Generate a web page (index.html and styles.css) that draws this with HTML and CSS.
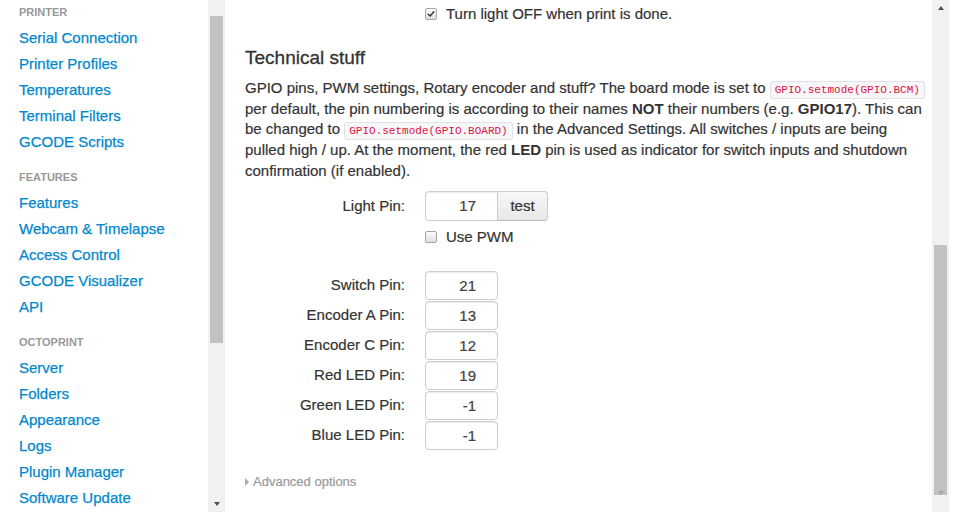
FILE: index.html
```html
<!DOCTYPE html>
<html>
<head>
<meta charset="utf-8">
<title>Settings</title>
<link rel="stylesheet" href="styles.css">
</head>
<body>
<div class="app">
  <div class="side-pane">
    <nav class="side">
      <ul class="nav">
        <li class="nav-header">Printer</li>
        <li><a>Serial Connection</a></li>
        <li><a>Printer Profiles</a></li>
        <li><a>Temperatures</a></li>
        <li><a>Terminal Filters</a></li>
        <li><a>GCODE Scripts</a></li>
        <li class="nav-header sep">Features</li>
        <li><a>Features</a></li>
        <li><a>Webcam &amp; Timelapse</a></li>
        <li><a>Access Control</a></li>
        <li><a>GCODE Visualizer</a></li>
        <li><a>API</a></li>
        <li class="nav-header sep">OctoPrint</li>
        <li><a>Server</a></li>
        <li><a>Folders</a></li>
        <li><a>Appearance</a></li>
        <li><a>Logs</a></li>
        <li><a>Plugin Manager</a></li>
        <li><a>Software Update</a></li>
      </ul>
    </nav>
    <div class="sbar">
      <div class="sbtn top"><span class="arr up light"></span></div>
      <div class="thumb side-thumb"></div>
      <div class="fill"></div>
      <div class="sbtn bottom"><span class="arr down dark"></span></div>
    </div>
  </div>
  <div class="main-pane">
    <div class="content">
      <div class="check-row">
        <span class="cb checked"><svg viewBox="0 0 12 12" width="10" height="10"><path d="M2.6 6.2 L4.9 8.4 L9.4 3.2" fill="none" stroke="#333" stroke-width="1.7" stroke-linecap="round" stroke-linejoin="round"/></svg></span>
        <span class="cb-text">Turn light OFF when print is done.</span>
      </div>
      <h4 class="title">Technical stuff</h4>
      <p class="desc">GPIO pins, PWM settings, Rotary encoder and stuff? The board mode is set to <code>GPIO.setmode(GPIO.BCM)</code> per default, the pin numbering is according to their names <strong>NOT</strong> their numbers (e.g. <strong>GPIO17</strong>). This can be changed to <code>GPIO.setmode(GPIO.BOARD)</code> in the Advanced Settings. All switches / inputs are being pulled high / up. At the moment, the red <strong>LED</strong> pin is used as indicator for switch inputs and shutdown confirmation (if enabled).</p>
      <div class="form-row light">
        <label class="ctl-label">Light Pin:</label>
        <div class="append">
          <span class="field join">17</span>
          <span class="btn">test</span>
        </div>
      </div>
      <div class="check-row pwm">
        <span class="cb"></span>
        <span class="cb-text">Use PWM</span>
      </div>
      <div class="pins">
        <div class="form-row pin"><label class="ctl-label">Switch Pin:</label><span class="field">21</span></div>
        <div class="form-row pin"><label class="ctl-label">Encoder A Pin:</label><span class="field">13</span></div>
        <div class="form-row pin"><label class="ctl-label">Encoder C Pin:</label><span class="field">12</span></div>
        <div class="form-row pin"><label class="ctl-label">Red LED Pin:</label><span class="field">19</span></div>
        <div class="form-row pin"><label class="ctl-label">Green LED Pin:</label><span class="field">-1</span></div>
        <div class="form-row pin"><label class="ctl-label">Blue LED Pin:</label><span class="field">-1</span></div>
      </div>
      <div class="advanced"><span class="caret"></span>Advanced options</div>
    </div>
    <div class="sbar">
      <div class="sbtn top"><span class="arr up dark"></span></div>
      <div class="fill"></div>
      <div class="thumb main-thumb"></div>
      <div class="sbtn bottom"><span class="arr down light"></span></div>
    </div>
  </div>
</div>
</body>
</html>
```
FILE: styles.css
```css
html, body {
  margin: 0;
  padding: 0;
  background: #fff;
}
body {
  font-family: "Liberation Sans", Arial, Helvetica, sans-serif;
  font-size: 15px;
  line-height: 20px;
  color: #333;
}
.app {
  display: flex;
  height: 512px;
  width: 949px;
}
.side-pane {
  display: flex;
  width: 225px;
  height: 512px;
}
.side {
  width: 208px;
  height: 512px;
  overflow: hidden;
}
.nav {
  list-style: none;
  margin: -1px 0 0;
  padding: 0;
}
.nav li a {
  display: block;
  padding: 3px 19px;
  line-height: 20px;
  color: #0088cc;
  -webkit-text-stroke: 0.25px #0088cc;
  cursor: pointer;
}
.nav-header {
  padding: 3px 19px;
  line-height: 20px;
  font-size: 11px;
  font-weight: bold;
  text-transform: uppercase;
  color: #999;
}
.nav-header.sep {
  margin-top: 9px;
}

/* scrollbars */
.sbar {
  width: 17px;
  height: 512px;
  background: #f1f1f1;
  display: flex;
  flex-direction: column;
  flex-shrink: 0;
}
.sbtn {
  display: flex;
  align-items: center;
  justify-content: center;
}
.sbtn.top { height: 16px; }
.sbtn.bottom { height: 17px; }
.fill { flex: 1; }
.thumb {
  margin: 0 2px;
  background: #c1c1c1;
}
.side-thumb { height: 327px; }
.main-thumb { height: 250px; }
.arr {
  width: 0;
  height: 0;
  border-left: 3.5px solid transparent;
  border-right: 3.5px solid transparent;
}
.arr.up { border-bottom: 4px solid #a3a3a3; }
.arr.down { border-top: 4px solid #a3a3a3; }
.arr.up.dark { border-bottom-color: #505050; }
.arr.down.dark { border-top-color: #505050; }

/* main */
.main-pane {
  display: flex;
  width: 724px;
  height: 512px;
}
.content {
  width: 682px;
  padding: 4px 5px 0 20px;
  overflow: hidden;
  -webkit-text-stroke: 0.2px #333;
}
.check-row {
  display: flex;
  align-items: center;
  height: 20px;
  margin-left: 180px;
}
.cb {
  box-sizing: border-box;
  width: 12px;
  height: 12px;
  border: 1px solid #a6a6a6;
  border-radius: 2px;
  background: linear-gradient(#fdfdfd, #dedede);
  display: flex;
  align-items: center;
  justify-content: center;
  -webkit-text-stroke: 0;
}
.cb-text {
  margin-left: 9px;
}
.title {
  margin: 22px 0 0;
  font-size: 19px;
  line-height: 24px;
  font-weight: normal;
  -webkit-text-stroke: 0.3px #333;
}
.desc {
  margin: 8px 0 0;
  line-height: 20.7px;
}
.desc strong {
  font-weight: bold;
  -webkit-text-stroke: 0;
}
code {
  font-family: "Liberation Mono", "DejaVu Sans Mono", monospace;
  font-size: 11px;
  line-height: 12px;
  padding: 2px 4px;
  color: #dd1144;
  background: #f7f7f9;
  border: 1px solid #e1e1e8;
  border-radius: 3px;
  white-space: nowrap;
  -webkit-text-stroke: 0;
}
.form-row {
  display: flex;
  align-items: center;
}
.ctl-label {
  width: 160px;
  margin-right: 20px;
  text-align: right;
}
.light {
  margin-top: 9px;
  height: 30px;
}
.append {
  display: flex;
}
.field {
  box-sizing: border-box;
  width: 73px;
  height: 29px;
  line-height: 27px;
  padding-right: 21px;
  text-align: right;
  color: #444;
  background: #fff;
  border: 1px solid #ccc;
  border-radius: 4px;
  box-shadow: inset 0 1px 1px rgba(0, 0, 0, 0.075);
}
.light .field {
  height: 30px;
  line-height: 28px;
}
.field.join {
  border-radius: 4px 0 0 4px;
}
.btn {
  box-sizing: border-box;
  width: 51px;
  height: 30px;
  line-height: 28px;
  margin-left: -1px;
  text-align: center;
  color: #333;
  background: linear-gradient(#f7f7f7, #e8e8e8);
  border: 1px solid #ccc;
  border-bottom-color: #bbb;
  border-radius: 0 4px 4px 0;
}
.pwm {
  margin-top: 6px;
}
.pins {
  margin-top: 24px;
}
.pin {
  height: 29px;
  margin-bottom: 1px;
}
.advanced {
  margin-top: 22px;
  display: flex;
  align-items: center;
  height: 20px;
  font-size: 13px;
  color: #999;
  -webkit-text-stroke: 0.2px #999;
}
.caret {
  width: 0;
  height: 0;
  border-top: 4px solid transparent;
  border-bottom: 4px solid transparent;
  border-left: 4px solid #aaa;
  margin-right: 4px;
}
```
